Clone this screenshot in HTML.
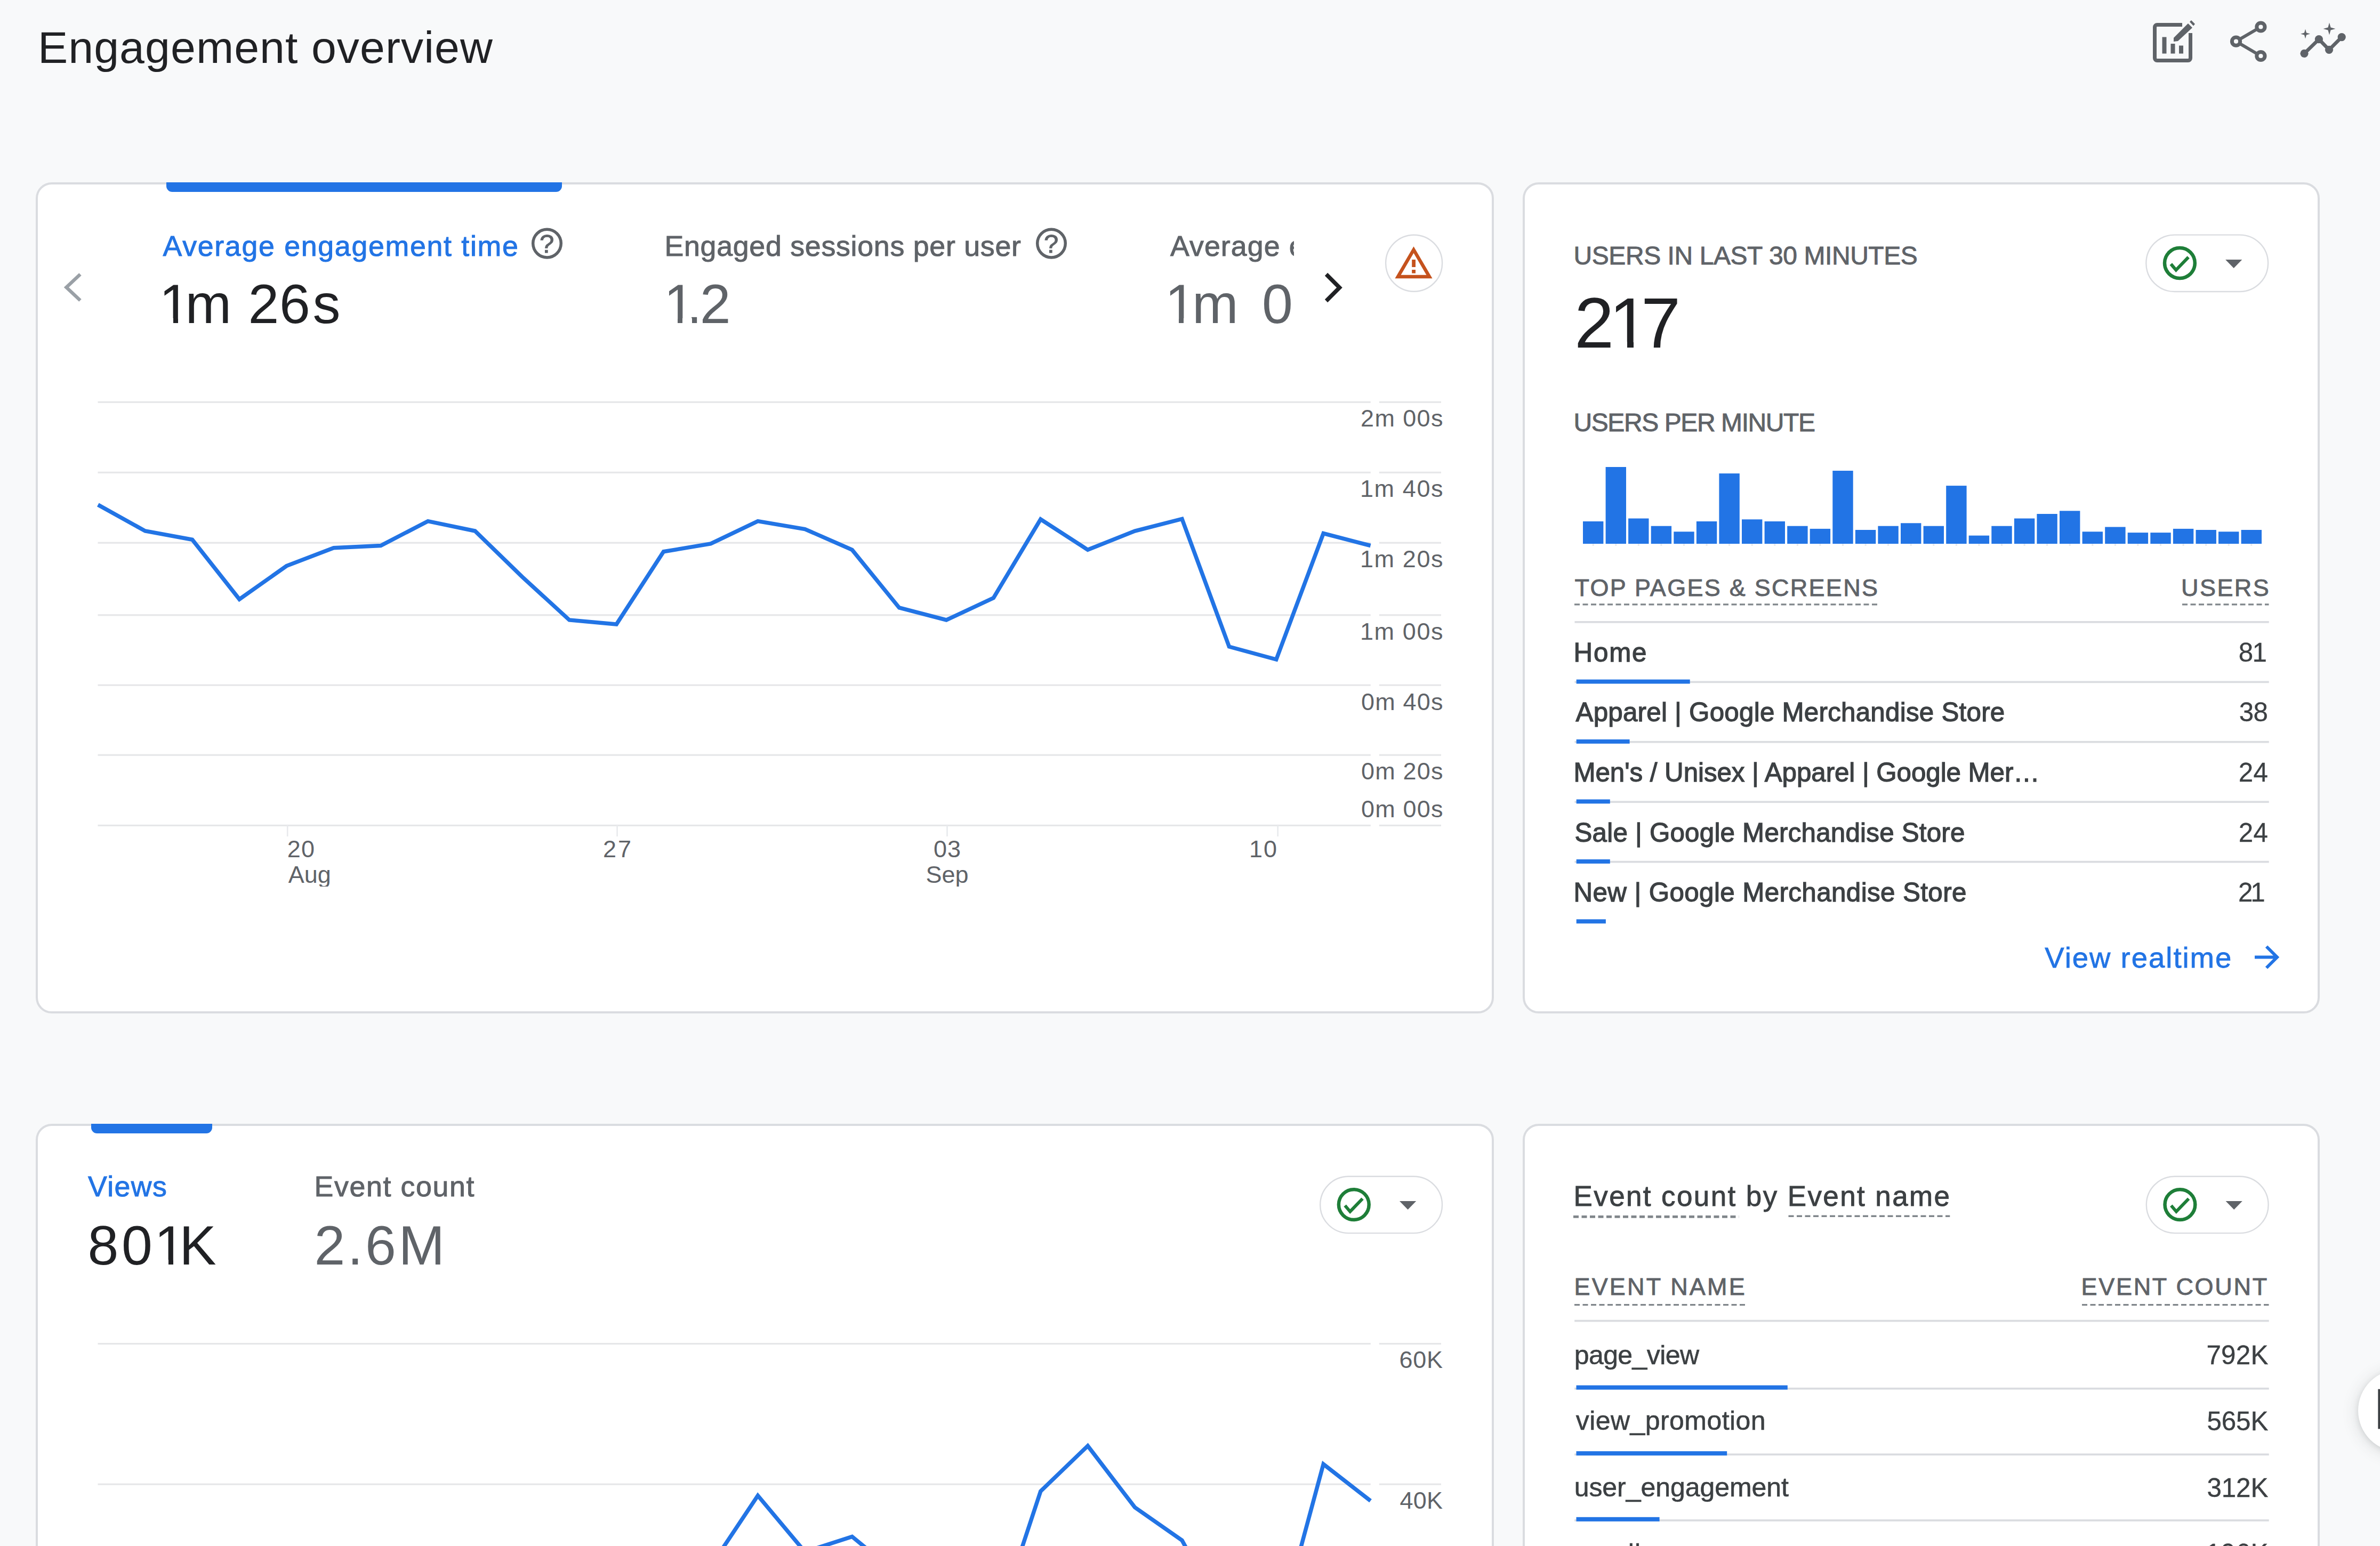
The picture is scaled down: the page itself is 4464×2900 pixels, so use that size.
<!DOCTYPE html>
<html lang="en"><head><meta charset="utf-8"><title>Engagement overview</title>
<style>
html,body{margin:0;padding:0;}
body{width:4464px;height:2900px;overflow:hidden;position:relative;background:#f8f9fa;font-family:"Liberation Sans",sans-serif;}
.card{position:absolute;box-sizing:border-box;background:#fff;border:4px solid #dadce0;border-radius:30px;}
.tab{position:absolute;background:#2274e5;border-radius:0 0 11px 11px;}
.t{position:absolute;white-space:pre;line-height:1;}
.w{position:absolute;background:#fff;}
.clip{position:absolute;overflow:hidden;}
.clip .t{position:absolute;}
svg{position:absolute;left:0;top:0;}
.fab{position:absolute;left:4423px;top:2568.5px;width:154px;height:154px;border-radius:50%;background:#fff;box-shadow:0 4px 30px rgba(60,64,67,.18),0 2px 10px rgba(60,64,67,.12);}
</style></head><body>
<div class="card" style="left:67px;top:342px;width:2735px;height:1559px"></div>
<div class="card" style="left:2856px;top:342px;width:1495px;height:1559px"></div>
<div class="card" style="left:67px;top:2108px;width:2735px;height:1000px"></div>
<div class="card" style="left:2856px;top:2108px;width:1495px;height:1000px"></div>
<div class="tab" style="left:312px;top:342px;width:741.5px;height:17.8px"></div>
<div class="tab" style="left:171px;top:2108px;width:227px;height:17.5px"></div>
<div class="fab"></div>
<svg width="4464" height="2900" viewBox="0 0 4464 2900">
<rect x="183.5" y="752.7" width="2387.3" height="3.2" fill="#e6e7e9"/>
<rect x="2586.8" y="752.7" width="116.2" height="3.2" fill="#e6e7e9"/>
<rect x="183.5" y="884.7" width="2387.3" height="3.2" fill="#e6e7e9"/>
<rect x="2586.8" y="884.7" width="116.2" height="3.2" fill="#e6e7e9"/>
<rect x="183.5" y="1016.6" width="2387.3" height="3.2" fill="#e6e7e9"/>
<rect x="2586.8" y="1016.6" width="116.2" height="3.2" fill="#e6e7e9"/>
<rect x="183.5" y="1152.2" width="2387.3" height="3.2" fill="#e6e7e9"/>
<rect x="2586.8" y="1152.2" width="116.2" height="3.2" fill="#e6e7e9"/>
<rect x="183.5" y="1283.6" width="2387.3" height="3.2" fill="#e6e7e9"/>
<rect x="2586.8" y="1283.6" width="116.2" height="3.2" fill="#e6e7e9"/>
<rect x="183.5" y="1414.7" width="2387.3" height="3.2" fill="#e6e7e9"/>
<rect x="2586.8" y="1414.7" width="116.2" height="3.2" fill="#e6e7e9"/>
<rect x="183.5" y="1546.8" width="2387.3" height="3.2" fill="#e6e7e9"/>
<rect x="2586.8" y="1546.8" width="116.2" height="3.2" fill="#e6e7e9"/>
<rect x="537.9" y="1548" width="2.6" height="21" fill="#e8eaed"/>
<rect x="1156.3" y="1548" width="2.6" height="21" fill="#e8eaed"/>
<rect x="1775.2" y="1548" width="2.6" height="21" fill="#e8eaed"/>
<rect x="2395.4" y="1548" width="2.6" height="21" fill="#e8eaed"/>
<polyline points="183.8,946.9 272.2,996.0 360.6,1012.2 449.0,1124.1 537.4,1061.6 625.8,1027.8 714.2,1023.5 802.6,977.6 891.0,996.0 979.4,1082.0 1067.8,1163.0 1156.2,1171.0 1244.6,1034.8 1333.0,1020.0 1421.4,977.6 1509.8,992.5 1598.2,1031.3 1686.6,1140.0 1775.0,1163.0 1863.4,1121.6 1951.8,974.0 2040.2,1031.3 2128.6,996.0 2217.0,973.4 2305.4,1213.0 2393.8,1237.0 2482.2,1000.6 2570.6,1023.5" fill="none" stroke="#2274e5" stroke-width="7.5" stroke-linejoin="miter" stroke-miterlimit="10"/>
<rect x="183.5" y="2519.0" width="2387.3" height="3.2" fill="#e6e7e9"/>
<rect x="2586.8" y="2519.0" width="116.2" height="3.2" fill="#e6e7e9"/>
<rect x="183.5" y="2782.6" width="2387.3" height="3.2" fill="#e6e7e9"/>
<rect x="2586.8" y="2782.6" width="116.2" height="3.2" fill="#e6e7e9"/>
<polyline points="1333.0,2938.0 1421.4,2805.4 1509.8,2911.0 1598.2,2882.4 1686.6,2955.0 1775.0,3000.0 1863.4,3065.0 1951.8,2797.3 2040.2,2712.2 2128.6,2827.6 2217.0,2889.4 2305.4,3050.0 2393.8,3073.0 2482.2,2746.5 2570.6,2815.3" fill="none" stroke="#2274e5" stroke-width="7.5" stroke-linejoin="miter" stroke-miterlimit="10"/>
<rect x="2969.0" y="978.0" width="38.4" height="42.0" fill="#2274e5"/>
<rect x="2986.7" y="1020" width="3" height="4" fill="#e8eaed"/>
<rect x="3011.6" y="876.0" width="38.4" height="144.0" fill="#2274e5"/>
<rect x="3029.3" y="1020" width="3" height="4" fill="#e8eaed"/>
<rect x="3054.1" y="972.5" width="38.4" height="47.5" fill="#2274e5"/>
<rect x="3071.8" y="1020" width="3" height="4" fill="#e8eaed"/>
<rect x="3096.7" y="986.7" width="38.4" height="33.3" fill="#2274e5"/>
<rect x="3114.4" y="1020" width="3" height="4" fill="#e8eaed"/>
<rect x="3139.3" y="997.3" width="38.4" height="22.7" fill="#2274e5"/>
<rect x="3157.0" y="1020" width="3" height="4" fill="#e8eaed"/>
<rect x="3181.9" y="978.0" width="38.4" height="42.0" fill="#2274e5"/>
<rect x="3199.6" y="1020" width="3" height="4" fill="#e8eaed"/>
<rect x="3224.4" y="888.1" width="38.4" height="131.9" fill="#2274e5"/>
<rect x="3242.1" y="1020" width="3" height="4" fill="#e8eaed"/>
<rect x="3267.0" y="974.3" width="38.4" height="45.7" fill="#2274e5"/>
<rect x="3284.7" y="1020" width="3" height="4" fill="#e8eaed"/>
<rect x="3309.6" y="978.0" width="38.4" height="42.0" fill="#2274e5"/>
<rect x="3327.3" y="1020" width="3" height="4" fill="#e8eaed"/>
<rect x="3352.2" y="986.7" width="38.4" height="33.3" fill="#2274e5"/>
<rect x="3369.9" y="1020" width="3" height="4" fill="#e8eaed"/>
<rect x="3394.7" y="991.9" width="38.4" height="28.1" fill="#2274e5"/>
<rect x="3412.4" y="1020" width="3" height="4" fill="#e8eaed"/>
<rect x="3437.3" y="883.0" width="38.4" height="137.0" fill="#2274e5"/>
<rect x="3455.0" y="1020" width="3" height="4" fill="#e8eaed"/>
<rect x="3479.9" y="994.0" width="38.4" height="26.0" fill="#2274e5"/>
<rect x="3497.6" y="1020" width="3" height="4" fill="#e8eaed"/>
<rect x="3522.4" y="986.7" width="38.4" height="33.3" fill="#2274e5"/>
<rect x="3540.1" y="1020" width="3" height="4" fill="#e8eaed"/>
<rect x="3565.0" y="981.3" width="38.4" height="38.7" fill="#2274e5"/>
<rect x="3582.7" y="1020" width="3" height="4" fill="#e8eaed"/>
<rect x="3607.6" y="986.7" width="38.4" height="33.3" fill="#2274e5"/>
<rect x="3625.3" y="1020" width="3" height="4" fill="#e8eaed"/>
<rect x="3650.2" y="911.1" width="38.4" height="108.9" fill="#2274e5"/>
<rect x="3667.9" y="1020" width="3" height="4" fill="#e8eaed"/>
<rect x="3692.7" y="1004.6" width="38.4" height="15.4" fill="#2274e5"/>
<rect x="3710.4" y="1020" width="3" height="4" fill="#e8eaed"/>
<rect x="3735.3" y="986.7" width="38.4" height="33.3" fill="#2274e5"/>
<rect x="3753.0" y="1020" width="3" height="4" fill="#e8eaed"/>
<rect x="3777.9" y="972.5" width="38.4" height="47.5" fill="#2274e5"/>
<rect x="3795.6" y="1020" width="3" height="4" fill="#e8eaed"/>
<rect x="3820.4" y="964.0" width="38.4" height="56.0" fill="#2274e5"/>
<rect x="3838.1" y="1020" width="3" height="4" fill="#e8eaed"/>
<rect x="3863.0" y="958.3" width="38.4" height="61.7" fill="#2274e5"/>
<rect x="3880.7" y="1020" width="3" height="4" fill="#e8eaed"/>
<rect x="3905.6" y="997.3" width="38.4" height="22.7" fill="#2274e5"/>
<rect x="3923.3" y="1020" width="3" height="4" fill="#e8eaed"/>
<rect x="3948.2" y="988.5" width="38.4" height="31.5" fill="#2274e5"/>
<rect x="3965.9" y="1020" width="3" height="4" fill="#e8eaed"/>
<rect x="3990.7" y="999.1" width="38.4" height="20.9" fill="#2274e5"/>
<rect x="4008.4" y="1020" width="3" height="4" fill="#e8eaed"/>
<rect x="4033.3" y="999.1" width="38.4" height="20.9" fill="#2274e5"/>
<rect x="4051.0" y="1020" width="3" height="4" fill="#e8eaed"/>
<rect x="4075.9" y="991.9" width="38.4" height="28.1" fill="#2274e5"/>
<rect x="4093.6" y="1020" width="3" height="4" fill="#e8eaed"/>
<rect x="4118.5" y="994.0" width="38.4" height="26.0" fill="#2274e5"/>
<rect x="4136.2" y="1020" width="3" height="4" fill="#e8eaed"/>
<rect x="4161.0" y="997.3" width="38.4" height="22.7" fill="#2274e5"/>
<rect x="4178.7" y="1020" width="3" height="4" fill="#e8eaed"/>
<rect x="4203.6" y="994.0" width="38.4" height="26.0" fill="#2274e5"/>
<rect x="4221.3" y="1020" width="3" height="4" fill="#e8eaed"/>
<rect x="2953.5" y="1165" width="1302.2" height="3.7" fill="#dadce0"/>
<rect x="2953.5" y="1277.5" width="1302.2" height="3.7" fill="#dadce0"/>
<rect x="2956.7" y="1274.6" width="213.0" height="7.9" fill="#2274e5"/>
<rect x="2953.5" y="1389.9" width="1302.2" height="3.7" fill="#dadce0"/>
<rect x="2956.7" y="1387.0" width="99.9" height="7.9" fill="#2274e5"/>
<rect x="2953.5" y="1502.4" width="1302.2" height="3.7" fill="#dadce0"/>
<rect x="2956.7" y="1499.5" width="63.1" height="7.9" fill="#2274e5"/>
<rect x="2953.5" y="1614.8" width="1302.2" height="3.7" fill="#dadce0"/>
<rect x="2956.7" y="1612.0" width="63.1" height="7.9" fill="#2274e5"/>
<rect x="2956.7" y="1724.4" width="55.2" height="7.9" fill="#2274e5"/>
<line x1="2953.0" y1="1133.8" x2="3522.0" y2="1133.8" stroke="#80868b" stroke-width="3.2" stroke-dasharray="10 5.5"/>
<line x1="4093.0" y1="1133.8" x2="4255.5" y2="1133.8" stroke="#80868b" stroke-width="3.2" stroke-dasharray="10 5.5"/>
<line x1="2951.0" y1="2282.3" x2="3261.3" y2="2282.3" stroke="#80868b" stroke-width="4.8" stroke-dasharray="10 5.5"/>
<line x1="3354.5" y1="2281.2" x2="3657.3" y2="2281.2" stroke="#80868b" stroke-width="3.4" stroke-dasharray="10 5.5"/>
<line x1="2953.0" y1="2447.6" x2="3275.5" y2="2447.6" stroke="#80868b" stroke-width="3.2" stroke-dasharray="10 5.5"/>
<line x1="3905.0" y1="2447.6" x2="4255.5" y2="2447.6" stroke="#80868b" stroke-width="3.2" stroke-dasharray="10 5.5"/>
<rect x="2953.2" y="2475.8" width="1302.5" height="3.7" fill="#dadce0"/>
<rect x="2953.2" y="2602.9" width="1302.5" height="3.7" fill="#dadce0"/>
<rect x="2956.5" y="2598.6" width="396.3" height="8.05" fill="#2274e5"/>
<rect x="2953.2" y="2726.5" width="1302.5" height="3.7" fill="#dadce0"/>
<rect x="2956.5" y="2722.2" width="282.7" height="8.05" fill="#2274e5"/>
<rect x="2953.2" y="2850.1" width="1302.5" height="3.7" fill="#dadce0"/>
<rect x="2956.5" y="2845.8" width="156.1" height="8.05" fill="#2274e5"/>
<circle cx="1026" cy="456.6" r="26.3" fill="none" stroke="#5f6368" stroke-width="5.5"/>
<circle cx="1972" cy="456.6" r="26.3" fill="none" stroke="#5f6368" stroke-width="5.5"/>
<polyline points="150.5,514.5 124.5,539 150.5,563.5" fill="none" stroke="#9aa0a6" stroke-width="6.5"/>
<polyline points="2487.5,514.5 2512.5,539.5 2487.5,564.5" fill="none" stroke="#202124" stroke-width="7.5"/>
<circle cx="2652.1" cy="493.7" r="53" fill="#fff" stroke="#dadce0" stroke-width="2.4"/>
<path d="M2651.5 468.5 L2681 519 L2622 519 Z" fill="none" stroke="#c5521d" stroke-width="6.4" stroke-linejoin="miter"/>
<rect x="2648.2" y="487" width="6.8" height="14" fill="#c5521d"/><rect x="2648.2" y="506" width="6.8" height="6.6" fill="#c5521d"/>
<rect x="4025.3" y="440.6" width="228.8" height="106.4" rx="53.2" fill="#fff" stroke="#dadce0" stroke-width="2.4"/>
<circle cx="4088.4" cy="493.5" r="28.4" fill="none" stroke="#1e7e38" stroke-width="6.5"/>
<polyline points="4071.8,495.3 4081.4,506.5 4104.7,482.4" fill="none" stroke="#1e7e38" stroke-width="6"/>
<path d="M4174.1 487.0 h31.2 l-15.6 16 Z" fill="#5f6368"/>
<rect x="2476.2" y="2206.7" width="228.8" height="106.4" rx="53.2" fill="#fff" stroke="#dadce0" stroke-width="2.4"/>
<circle cx="2539.3" cy="2259.6" r="28.4" fill="none" stroke="#1e7e38" stroke-width="6.5"/>
<polyline points="2522.7,2261.4 2532.3,2272.6 2555.6,2248.5" fill="none" stroke="#1e7e38" stroke-width="6"/>
<path d="M2625.0 2253.1 h31.2 l-15.6 16 Z" fill="#5f6368"/>
<rect x="4025.8" y="2206.7" width="228.8" height="106.4" rx="53.2" fill="#fff" stroke="#dadce0" stroke-width="2.4"/>
<circle cx="4088.9" cy="2259.6" r="28.4" fill="none" stroke="#1e7e38" stroke-width="6.5"/>
<polyline points="4072.3,2261.4 4081.9,2272.6 4105.2,2248.5" fill="none" stroke="#1e7e38" stroke-width="6"/>
<path d="M4174.6 2253.1 h31.2 l-15.6 16 Z" fill="#5f6368"/>
<path d="M4229 1795.5 H4270 M4251 1775.5 L4271 1795.5 L4251 1815.5" fill="none" stroke="#2274e5" stroke-width="6"/>
<path d="M4093 46.5 H4046 a4.5 4.5 0 0 0 -4.5 4.5 V109 a4.5 4.5 0 0 0 4.5 4.5 H4104 a4.5 4.5 0 0 0 4.5 -4.5 V62" fill="none" stroke="#5f6368" stroke-width="7"/>
<rect x="4055.5" y="69.5" width="8" height="31" fill="#5f6368"/><rect x="4071.5" y="82" width="8" height="18.5" fill="#5f6368"/><rect x="4087" y="85.5" width="8" height="15" fill="#5f6368"/>
<path d="M4077 71 L4104 44 L4112 52 L4085 77 L4077 78 Z" fill="#5f6368" stroke="#f8f9fa" stroke-width="0"/>
<path d="M4107 41 L4110 38 L4117 45 L4114 48.5 Z" fill="#5f6368"/>
<path d="M4194 77.7 L4240.4 50.5 M4194 77.7 L4240.4 105" stroke="#5f6368" stroke-width="6" fill="none"/>
<circle cx="4194" cy="77.7" r="7.6" fill="#f8f9fa" stroke="#5f6368" stroke-width="7"/>
<circle cx="4240.4" cy="50.5" r="7.6" fill="#f8f9fa" stroke="#5f6368" stroke-width="7"/>
<circle cx="4240.4" cy="105" r="7.6" fill="#f8f9fa" stroke="#5f6368" stroke-width="7"/>
<polyline points="4322,100.3 4349.4,73.7 4368.5,93.3 4392.2,69.6" fill="none" stroke="#5f6368" stroke-width="6.5"/>
<circle cx="4322" cy="100.3" r="7.6" fill="#5f6368"/>
<circle cx="4349.4" cy="73.7" r="7.6" fill="#5f6368"/>
<circle cx="4368.5" cy="93.3" r="7.6" fill="#5f6368"/>
<circle cx="4392.2" cy="69.6" r="7.6" fill="#5f6368"/>
<path d="M4324 54.6 L4325.98 61.620000000000005 L4333 63.6 L4325.98 65.58 L4324 72.6 L4322.02 65.58 L4315 63.6 L4322.02 61.620000000000005 Z" fill="#5f6368"/>
<path d="M4369 42.5 L4371.53 51.47 L4380.5 54 L4371.53 56.53 L4369 65.5 L4366.47 56.53 L4357.5 54 L4366.47 51.47 Z" fill="#5f6368"/>
<rect x="4460.3" y="2605.7" width="10" height="74.7" fill="#3c4043"/>
</svg>
<span class="t" style="left:71.00px;top:46.62px;font-size:84.3px;color:#202124;letter-spacing:1.044px;">Engagement overview</span>
<span class="t" style="left:305.60px;top:434.53px;font-size:53.7px;color:#2274e5;letter-spacing:1.705px;-webkit-text-stroke:1.0px #2274e5;">Average engagement time</span>
<span class="t" style="left:298.50px;top:518.15px;font-size:104px;color:#202124;"><span style="letter-spacing:-8.8px">1</span><span style="letter-spacing:1.2px">m </span><span style="letter-spacing:0.7px">2</span><span style="letter-spacing:4.7px">6</span>s</span>
<span class="t" style="left:1246.40px;top:434.53px;font-size:53.7px;color:#5f6368;letter-spacing:0.744px;-webkit-text-stroke:1.0px #5f6368;">Engaged sessions per user</span>
<span class="t" style="left:1245.00px;top:518.15px;font-size:104px;color:#5f6368;"><span style="letter-spacing:-15px">1</span><span style="letter-spacing:-4px">.</span>2</span>
<span class="t" style="left:1012.00px;top:432.91px;font-size:49px;color:#5f6368;-webkit-text-stroke:1.0px #5f6368;">?</span>
<span class="t" style="left:1958.00px;top:432.91px;font-size:49px;color:#5f6368;-webkit-text-stroke:1.0px #5f6368;">?</span>
<span class="t" style="left:2552.00px;top:762.40px;font-size:45px;color:#5f6368;letter-spacing:1.386px;">2m 00s</span>
<span class="t" style="left:2551.00px;top:894.40px;font-size:45px;color:#5f6368;letter-spacing:1.586px;">1m 40s</span>
<span class="t" style="left:2551.00px;top:1026.10px;font-size:45px;color:#5f6368;letter-spacing:1.586px;">1m 20s</span>
<span class="t" style="left:2551.00px;top:1162.10px;font-size:45px;color:#5f6368;letter-spacing:1.586px;">1m 00s</span>
<span class="t" style="left:2553.00px;top:1293.90px;font-size:45px;color:#5f6368;letter-spacing:1.186px;">0m 40s</span>
<span class="t" style="left:2553.00px;top:1424.20px;font-size:45px;color:#5f6368;letter-spacing:1.186px;">0m 20s</span>
<span class="t" style="left:2553.00px;top:1494.70px;font-size:45px;color:#5f6368;letter-spacing:1.186px;">0m 00s</span>
<span class="t" style="left:538.70px;top:1570.20px;font-size:45px;color:#5f6368;letter-spacing:1.273px;">20</span>
<span class="t" style="left:1131.00px;top:1570.20px;font-size:45px;color:#5f6368;letter-spacing:2.973px;">27</span>
<span class="t" style="left:1751.00px;top:1570.20px;font-size:45px;color:#5f6368;letter-spacing:0.973px;">03</span>
<span class="t" style="left:2343.00px;top:1570.20px;font-size:45px;color:#5f6368;letter-spacing:1.973px;">10</span>
<span class="t" style="left:2951.50px;top:456.36px;font-size:48px;color:#5f6368;letter-spacing:-0.432px;-webkit-text-stroke:0.9px #5f6368;">USERS IN LAST 30 MINUTES</span>
<span class="t" style="left:2952.90px;top:538.97px;font-size:133.5px;color:#202124;"><span style="letter-spacing:-8.8px">2</span><span style="letter-spacing:-14.7px">1</span>7</span>
<span class="t" style="left:2951.50px;top:769.36px;font-size:48px;color:#5f6368;letter-spacing:-1.414px;-webkit-text-stroke:0.9px #5f6368;">USERS PER MINUTE</span>
<span class="t" style="left:2953.50px;top:1079.50px;font-size:45px;color:#5f6368;letter-spacing:2.263px;-webkit-text-stroke:0.9px #5f6368;">TOP PAGES &amp; SCREENS</span>
<span class="t" style="left:4091.00px;top:1079.50px;font-size:45px;color:#5f6368;letter-spacing:2.444px;-webkit-text-stroke:0.9px #5f6368;">USERS</span>
<span class="t" style="left:2951.50px;top:1198.86px;font-size:49.3px;color:#3c4043;letter-spacing:1.806px;-webkit-text-stroke:1.3px #3c4043;">Home</span>
<span class="t" style="left:4198.70px;top:1198.86px;font-size:49.3px;color:#3c4043;letter-spacing:-1.617px;-webkit-text-stroke:0.3px #3c4043;">81</span>
<span class="t" style="left:2955.50px;top:1311.46px;font-size:49.3px;color:#3c4043;letter-spacing:0.248px;-webkit-text-stroke:1.3px #3c4043;">Apparel | Google Merchandise Store</span>
<span class="t" style="left:4199.70px;top:1311.46px;font-size:49.3px;color:#3c4043;letter-spacing:-0.617px;-webkit-text-stroke:0.3px #3c4043;">38</span>
<span class="t" style="left:2951.50px;top:1424.06px;font-size:49.3px;color:#3c4043;letter-spacing:-0.057px;-webkit-text-stroke:1.3px #3c4043;">Men's / Unisex | Apparel | Google Mer…</span>
<span class="t" style="left:4198.70px;top:1424.06px;font-size:49.3px;color:#3c4043;letter-spacing:0.383px;-webkit-text-stroke:0.3px #3c4043;">24</span>
<span class="t" style="left:2953.50px;top:1536.66px;font-size:49.3px;color:#3c4043;letter-spacing:0.221px;-webkit-text-stroke:1.3px #3c4043;">Sale | Google Merchandise Store</span>
<span class="t" style="left:4198.70px;top:1536.66px;font-size:49.3px;color:#3c4043;letter-spacing:0.383px;-webkit-text-stroke:0.3px #3c4043;">24</span>
<span class="t" style="left:2951.50px;top:1649.26px;font-size:49.3px;color:#3c4043;letter-spacing:0.403px;-webkit-text-stroke:1.3px #3c4043;">New | Google Merchandise Store</span>
<span class="t" style="left:4198.00px;top:1649.26px;font-size:49.3px;color:#3c4043;letter-spacing:-4.117px;-webkit-text-stroke:0.3px #3c4043;">21</span>
<span class="t" style="left:3835.30px;top:1769.86px;font-size:54.5px;color:#2274e5;letter-spacing:1.991px;-webkit-text-stroke:0.8px #2274e5;">View realtime</span>
<span class="t" style="left:164.90px;top:2199.33px;font-size:53.7px;color:#2274e5;letter-spacing:1.426px;-webkit-text-stroke:1.0px #2274e5;">Views</span>
<span class="t" style="left:164.60px;top:2284.35px;font-size:104px;color:#202124;"><span style="letter-spacing:5.6px">8</span><span style="letter-spacing:3.6px">0</span><span style="letter-spacing:-11px">1</span>K</span>
<span class="t" style="left:589.50px;top:2199.33px;font-size:53.7px;color:#5f6368;letter-spacing:1.628px;-webkit-text-stroke:1.0px #5f6368;">Event count</span>
<span class="t" style="left:589.50px;top:2284.35px;font-size:104px;color:#5f6368;letter-spacing:4.442px;">2.6M</span>
<span class="t" style="left:2624.50px;top:2527.70px;font-size:45px;color:#5f6368;letter-spacing:0.673px;">60K</span>
<span class="t" style="left:2625.50px;top:2791.90px;font-size:45px;color:#5f6368;letter-spacing:0.173px;">40K</span>
<span class="t" style="left:2951.50px;top:2216.83px;font-size:53px;color:#3c4043;letter-spacing:2.392px;-webkit-text-stroke:0.9px #3c4043;">Event count by Event name</span>
<span class="t" style="left:2952.50px;top:2390.60px;font-size:45px;color:#5f6368;letter-spacing:3.163px;-webkit-text-stroke:0.9px #5f6368;">EVENT NAME</span>
<span class="t" style="left:3903.50px;top:2390.60px;font-size:45px;color:#5f6368;letter-spacing:2.697px;-webkit-text-stroke:0.9px #5f6368;">EVENT COUNT</span>
<span class="t" style="left:2952.70px;top:2516.57px;font-size:50px;color:#3c4043;letter-spacing:-0.582px;-webkit-text-stroke:0.6px #3c4043;">page_view</span>
<span class="t" style="left:4138.40px;top:2517.16px;font-size:49.3px;color:#3c4043;letter-spacing:0.283px;-webkit-text-stroke:0.4px #3c4043;">792K</span>
<span class="t" style="left:2955.70px;top:2640.17px;font-size:50px;color:#3c4043;letter-spacing:0.441px;-webkit-text-stroke:0.6px #3c4043;">view_promotion</span>
<span class="t" style="left:4139.40px;top:2640.76px;font-size:49.3px;color:#3c4043;letter-spacing:-0.050px;-webkit-text-stroke:0.4px #3c4043;">565K</span>
<span class="t" style="left:2952.70px;top:2765.17px;font-size:50px;color:#3c4043;letter-spacing:-0.063px;-webkit-text-stroke:0.6px #3c4043;">user_engagement</span>
<span class="t" style="left:4139.40px;top:2765.76px;font-size:49.3px;color:#3c4043;letter-spacing:-0.050px;-webkit-text-stroke:0.4px #3c4043;">312K</span>
<span class="t" style="left:2954.70px;top:2888.87px;font-size:50px;color:#3c4043;letter-spacing:1.147px;-webkit-text-stroke:0.6px #3c4043;">scroll</span>
<span class="t" style="left:4137.40px;top:2889.46px;font-size:49.3px;color:#3c4043;letter-spacing:0.617px;-webkit-text-stroke:0.4px #3c4043;">196K</span>
<div class="w" style="left:304.9px;top:596.9px;width:19.7px;height:10.8px"></div><div class="w" style="left:333.8px;top:596.9px;width:18.9px;height:10.8px"></div><div class="w" style="left:1251.4px;top:596.9px;width:19.7px;height:10.8px"></div><div class="w" style="left:1280.3px;top:596.9px;width:17.4px;height:10.8px"></div><div class="w" style="left:3027.0px;top:640.5px;width:24.9px;height:13.0px"></div><div class="w" style="left:3063.7px;top:640.5px;width:23.9px;height:13.0px"></div><div class="w" style="left:295.9px;top:2363.1px;width:19.7px;height:10.8px"></div><div class="w" style="left:324.8px;top:2363.1px;width:18.9px;height:10.8px"></div>
<div class="clip" style="left:2150px;top:400px;width:277px;height:260px">
<span class="t" style="left:45px;top:34.53px;font-size:53.7px;color:#5f6368;letter-spacing:1.1px;-webkit-text-stroke:1.0px #5f6368">Average engagement time per session</span>
<span class="t" style="left:35px;top:118.15px;font-size:104px;color:#5f6368;"><span style="letter-spacing:-6.8px">1</span><span style="letter-spacing:7.7px">m </span>0<span style="margin-left:40px">4s</span></span>
<div class="w" style="left:41.4px;top:196.9px;width:19.7px;height:10.8px"></div><div class="w" style="left:70.3px;top:196.9px;width:18.9px;height:10.8px"></div>
</div>
<div class="clip" style="left:500px;top:1610px;width:200px;height:52.6px"><span class="t" style="left:40.700000000000045px;top:7.70px;font-size:45px;color:#5f6368">Aug</span></div>
<div class="clip" style="left:1676px;top:1610px;width:200px;height:52.6px"><span class="t" style="left:60px;top:7.70px;font-size:45px;color:#5f6368;width:81px;text-align:center">Sep</span></div>
</body></html>
